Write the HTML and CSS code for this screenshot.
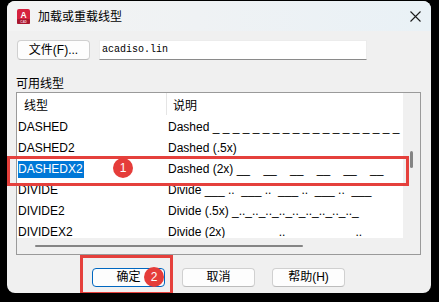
FILE: index.html
```html
<!DOCTYPE html>
<html>
  <head>
    <link rel="stylesheet" href="styles.css">
  </head>
  <body>
    <div class="window">
      <div class="titlebar">
        <svg class="app-icon" width="13" height="15" viewBox="0 0 13 15">
          <rect x="0" y="0" width="13" height="15" rx="2" fill="#d6223f"/>
          <rect x="0" y="10" width="13" height="5" rx="1" fill="#a8172f"/>
          <text x="6.5" y="8.5" text-anchor="middle" font-family="Liberation Sans" font-weight="bold" font-size="8.5" fill="#fff">A</text>
          <text x="6.5" y="13.6" text-anchor="middle" font-family="Liberation Sans" font-weight="bold" font-size="3" fill="#f4c6cf">CAD</text>
        </svg>
        <span class="title">加载或重载线型</span>
        <svg class="close" width="11" height="11" viewBox="0 0 11 11">
          <path d="M0.5 0.5 L10.5 10.5 M10.5 0.5 L0.5 10.5" stroke="#1b1b1b" stroke-width="1.1" fill="none"/>
        </svg>
      </div>

      <div class="content">
        <div class="file-row">
          <button class="btn file-btn">文件(F)...</button>
          <div class="path-field">acadiso.lin</div>
        </div>

        <div class="group-label">可用线型</div>

        <div class="listview">
          <div class="viewport">
            <div class="lv-head">
              <div class="col-name">线型</div>
              <div class="col-desc">说明</div>
            </div>
            <div class="lv-row">
              <div class="col-name">DASHED</div>
              <div class="col-desc">Dashed _ _ _ _ _ _ _ _ _ _ _ _ _ _ _ _ _ _ _</div>
            </div>
            <div class="lv-row">
              <div class="col-name">DASHED2</div>
              <div class="col-desc">Dashed (.5x)</div>
            </div>
            <div class="lv-row">
              <div class="col-name"><span class="selected">DASHEDX2</span></div>
              <div class="col-desc">Dashed (2x) __    __    __    __    __    __</div>
            </div>
            <div class="lv-row">
              <div class="col-name">DIVIDE</div>
              <div class="col-desc">Divide ___ ..  ___ ..  ___ ..  ___ ..  ___</div>
            </div>
            <div class="lv-row">
              <div class="col-name">DIVIDE2</div>
              <div class="col-desc">Divide (.5x) _.._.._.._.._.._.._.._.._.._</div>
            </div>
            <div class="lv-row">
              <div class="col-name">DIVIDEX2</div>
              <div class="col-desc">Divide (2x) _______ ..  _________ ..  ____</div>
            </div>
          </div>
          <div class="vscroll"><div class="vthumb"></div></div>
          <div class="hscroll"><div class="hthumb"></div></div>
          <div class="corner"></div>
        </div>

        <div class="actions">
          <button class="btn default">确定</button>
          <button class="btn">取消</button>
          <button class="btn">帮助(H)</button>
        </div>
      </div>

      <div class="mark mark-row"></div>
      <div class="badge badge-one">1</div>
      <div class="mark mark-ok"></div>
      <div class="badge badge-two">2</div>
    </div>
  </body>
</html>
```

FILE: styles.css
```css
body {
  margin: 0;
  padding: 1px 0 0 7px;
  background: #000;
  font-family: "Liberation Sans", "Noto Sans CJK SC", sans-serif;
  font-size: 12px;
  color: #000;
}

.window {
  position: relative;
  width: 424px;
  height: 292px;
  background: #f0f0f0;
  border-radius: 8px;
}

.titlebar {
  display: flex;
  align-items: center;
  height: 30px;
  padding: 0 9px 0 10px;
  border-radius: 8px 8px 0 0;
  background: linear-gradient(90deg, #f3f3f3 0%, #eff2f4 45%, #e9f1f6 100%);
}

.app-icon {
  flex: none;
}

.title {
  flex: 1;
  margin-left: 8px;
  font-family: "Noto Sans CJK SC", sans-serif;
  font-size: 12px;
  line-height: 16px;
}

.close {
  flex: none;
  margin-right: 1px;
}

.content {
  padding: 0 10px 0 9px;
}

.file-row {
  display: flex;
  gap: 9px;
  margin-top: 9px;
  padding-left: 1px;
}

.btn {
  all: unset;
  box-sizing: border-box;
  width: 73px;
  height: 19px;
  background: #fdfdfd;
  border: 1px solid #d0d0d0;
  border-bottom-color: #bcbcbc;
  border-radius: 4px;
  text-align: center;
  font-family: "Liberation Sans", "Noto Sans CJK SC", sans-serif;
  font-size: 12px;
  line-height: 17px;
}

.file-btn {
  height: 20px;
  line-height: 18px;
}

.btn.default {
  border-color: #0067c0;
}

.path-field {
  box-sizing: border-box;
  width: 268px;
  height: 20px;
  padding-left: 2px;
  background: #fff;
  border: 1px solid #ececec;
  border-bottom-color: #8a8a8a;
  font-family: "Liberation Mono", monospace;
  font-size: 10px;
  line-height: 18px;
}

.group-label {
  margin-top: 14px;
  font-family: "Noto Sans CJK SC", sans-serif;
  line-height: 17px;
}

.listview {
  display: grid;
  grid-template-columns: 386px 17px;
  grid-template-rows: 145px 16px;
  margin-top: 1px;
  width: 403px;
  border: 1px solid #9a9a9a;
  background: #f0f0f0;
}

.viewport {
  overflow: hidden;
  background: #fff;
}

.lv-head {
  display: flex;
  height: 24px;
  line-height: 23px;
  font-family: "Noto Sans CJK SC", sans-serif;
}

.lv-head .col-name {
  padding-left: 7px;
  border-right: 1px solid #e5e5e5;
  height: 22px;
}

.lv-head .col-desc {
  padding-left: 6px;
}

.lv-row {
  display: flex;
  height: 21px;
  line-height: 21px;
  white-space: pre;
}

.col-name {
  box-sizing: border-box;
  flex: none;
  width: 150px;
  padding-left: 1px;
}

.col-desc {
  padding-left: 1px;
}

.selected {
  display: inline-block;
  line-height: 17px;
  padding: 0 1px 0 0;
  background: #0078d7;
  color: #fff;
}

.vscroll {
  background: #f0f0f0;
  padding: 58px 0 0 7px;
}

.vthumb {
  width: 3px;
  height: 17px;
  border-radius: 2px;
  background: #858585;
}

.hscroll {
  background: #f0f0f0;
  padding: 7px 0 0 18px;
}

.hthumb {
  width: 268px;
  height: 2px;
  border-radius: 2px;
  background: #858585;
}

.corner {
  background: #f0f0f0;
}

.actions {
  display: flex;
  gap: 17px;
  margin-top: 13px;
  padding-left: 76px;
}

.mark {
  position: absolute;
  box-sizing: border-box;
  border: 3px solid #e5403c;
}

.mark-row {
  left: 0;
  top: 155px;
  width: 402px;
  height: 30px;
}

.mark-ok {
  left: 73px;
  top: 254px;
  width: 93px;
  height: 40px;
}

.badge {
  position: absolute;
  width: 20px;
  height: 20px;
  border-radius: 50%;
  background: #e53d3a;
  color: #fff;
  text-align: center;
  font-size: 12px;
  line-height: 20px;
}

.badge-one {
  left: 106px;
  top: 157px;
}

.badge-two {
  left: 137px;
  top: 266px;
}
```
